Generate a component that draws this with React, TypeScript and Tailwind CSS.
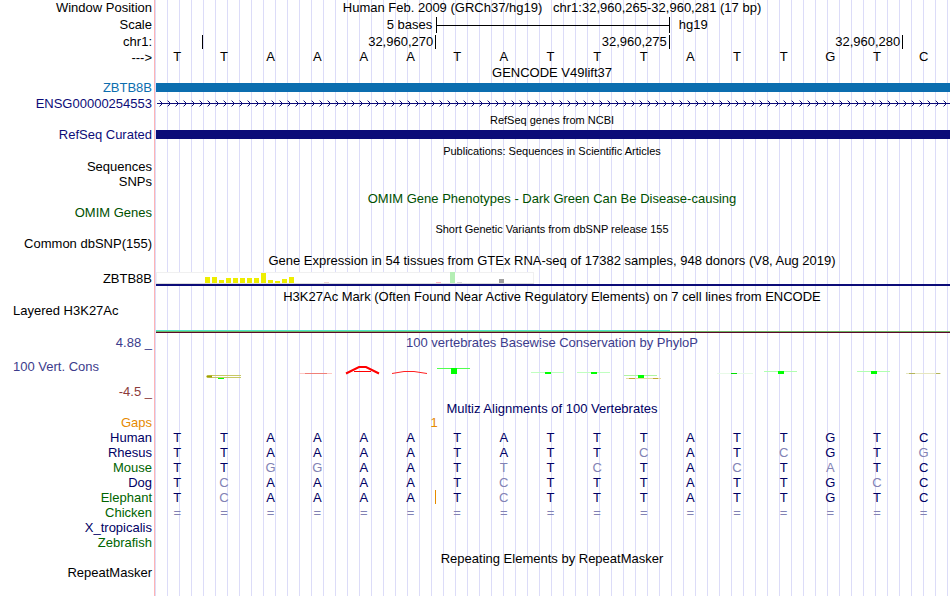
import type { ReactNode } from "react";
import clsx from "clsx";

interface RowProps {
  label?: string;
  height: string;
  labelClass?: string;
  align?: string;
  children?: ReactNode;
}

const Row = ({
  label,
  height,
  labelClass = "text-black text-right",
  align = "items-center",
  children,
}: RowProps) => (
  <div className={clsx("flex", height, align)}>
    <div
      className={clsx(
        "w-[154px] shrink-0 pl-[13px] pr-[2px] leading-4 whitespace-nowrap",
        labelClass
      )}
    >
      {label}
    </div>
    <div className="min-w-0 flex-1">{children}</div>
  </div>
);

const Title = ({
  height,
  className = "text-black",
  children,
}: {
  height: string;
  className?: string;
  children: ReactNode;
}) => (
  <Row height={height}>
    <h2
      className={clsx(
        "text-center leading-4 whitespace-pre",
        className
      )}
    >
      {children}
    </h2>
  </Row>
);

const REFERENCE = "TTAAAATATTTATTGTC";

const SPECIES = [
  { name: "Human", color: "text-[#000064]", bases: "TTAAAATATTTATTGTC" },
  { name: "Rhesus", color: "text-[#000064]", bases: "TTAAAATATTCATCGTG" },
  { name: "Mouse", color: "text-[#006400]", bases: "TTGGAATTTCTACTATC" },
  { name: "Dog", color: "text-[#000064]", bases: "TCAAAATCTTTATTGCC" },
  { name: "Elephant", color: "text-[#006400]", bases: "TCAAAATCTTTATTGTC", insertAfter: 5 },
  { name: "Chicken", color: "text-[#006400]", bases: "=================" },
  { name: "X_tropicalis", color: "text-[#000064]", bases: "" },
  { name: "Zebrafish", color: "text-[#006400]", bases: "" },
];

// [x, height, color]
const TISSUES: [number, number, string][] = [
  [49, 6, "#eeee00"],
  [56, 6, "#eeee00"],
  [63, 3, "#eeee00"],
  [70, 5, "#eeee00"],
  [77, 5, "#eeee00"],
  [84, 5, "#eeee00"],
  [91, 5, "#eeee00"],
  [98, 5, "#eeee00"],
  [105, 10, "#eeee00"],
  [112, 3, "#eeee00"],
  [119, 2, "#eeee00"],
  [126, 4, "#eeee00"],
  [133, 6, "#eeee00"],
  [168, 1, "#eed5d2"],
  [280, 1, "#ffb6c1"],
  [294, 11, "#b4eeb4"],
  [301, 1, "#d9d9d9"],
  [343, 4, "#9e9e9e"],
];

// flattened T marks: x, y, stem height, bar color
const CONS_MARKS: [number, number, number, string][] = [
  [281, 16, 6, "#50ff50"],
  [375, 20, 2, "#c0ffc0"],
  [421, 20, 2, "#c0ffc0"],
  [468, 23, 3, "#b0f5a0"],
  [608, 19, 3, "#b0ffb0"],
  [701, 19, 3, "#b0ffb0"],
];

const IntronArrows = () => (
  <svg className="block h-[7px] w-full" shapeRendering="crispEdges">
    <defs>
      <pattern id="chevron" width="8" height="7" patternUnits="userSpaceOnUse">
        <path d="M4 1h1v1h-1zM5 2h1v1h-1zM6 3h1v1h-1zM5 4h1v1h-1zM4 5h1v1h-1z" fill="#0c0c78" />
        <path d="M3 0h1v1h-1zM3 6h1v1h-1z" fill="#9a9acc" />
      </pattern>
    </defs>
    <rect width="100%" height="7" fill="url(#chevron)" />
    <rect x="1" y="3" width="100%" height="1" fill="#0c0c78" />
  </svg>
);

const ExpressionChart = () => (
  <svg className="block h-3 w-[378px]" shapeRendering="crispEdges">
    <rect width="378" height="12" fill="#f0f0f0" />
    <rect x="1" y="1" width="376" height="10" fill="#ffffff" />
    <rect y="11" width="378" height="1" fill="#dcdcdc" />
    {TISSUES.map(([x, h, color]) => (
      <rect key={x} x={x} y={11 - h} width="5" height={h} fill={color} />
    ))}
  </svg>
);

const ConservationChart = () => (
  <svg className="block h-[29px] w-full">
    <g fill="none">
      <path d="M85 23.5H56Q50 23.5 50 24.5Q50 25.5 56 25.5H85" stroke="#c8c864" />
      <path d="M51 24.5h5" stroke="#a0a000" strokeWidth="2" />
      <path d="M143 21.5h33" stroke="#ffc8c4" />
      <path d="M149 21.5h22" stroke="#f08078" />
      <path d="M190 21.5L203 15H210L223 21.5" stroke="#ff0000" strokeWidth="2" />
      <path d="M198 19.5h17" stroke="#ff0000" />
      <path d="M236 21.5L248 19.5H258L271 21.5" stroke="#ff2020" />
      <path d="M470 26.5h35" stroke="#e6dca0" />
      <path d="M473 26.5h6M497 26.5h5" stroke="#c0a830" />
      <path d="M750 21.5h35" stroke="#e6e6be" />
      <path d="M753 21.5h6M780 21.5h4" stroke="#b4b45a" />
      <path d="M561 21.5h36" stroke="#e8fae8" />
    </g>
    <g shapeRendering="crispEdges">
      <rect x="62" y="26" width="6" height="1" fill="#00ff00" />
      <rect x="575" y="21" width="6" height="1" fill="#00e000" />
      {CONS_MARKS.map(([x, y, h, color]) => (
        <g key={x}>
          <rect x={x} y={y} width="33" height="1" fill={color} />
          <rect x={x + 14} y={y} width="6" height={h} fill="#00ff00" />
        </g>
      ))}
    </g>
  </svg>
);

const Alignment = () => (
  <div className="pr-[3px]">
    <table className="w-full table-fixed border-collapse">
      <colgroup>
        <col className="w-[154px]" />
        {REFERENCE.split("").map((_, i) => (
          <col key={i} />
        ))}
      </colgroup>
      <tbody>
        <tr className="h-[15px] text-[#e68a00]">
          <th scope="row" className="p-0 pr-[2px] text-right leading-[15px] font-normal">
            Gaps
          </th>
          {REFERENCE.split("").map((_, i) => (
            <td key={i} className="relative p-0 leading-[15px]">
              {i === 5 && <span className="absolute top-0 -right-1">1</span>}
            </td>
          ))}
        </tr>
        {SPECIES.map(({ name, color, bases, insertAfter }) => (
          <tr key={name} className="h-[15px]">
            <th
              scope="row"
              className={clsx("p-0 pr-[2px] text-right leading-[15px] font-normal", color)}
            >
              {name}
            </th>
            {REFERENCE.split("").map((ref, i) => (
              <td
                key={i}
                className={clsx(
                  "relative p-0 text-center leading-[15px]",
                  bases[i] === ref ? "text-[#000064]" : "text-[#8282b4]"
                )}
              >
                {bases[i]}
                {insertAfter === i && (
                  <span className="absolute top-0 -right-[2px] h-[14px] w-px bg-[#e68a00]" />
                )}
              </td>
            ))}
          </tr>
        ))}
      </tbody>
    </table>
  </div>
);

export default function App() {
  return (
    <main className="min-h-screen overflow-hidden bg-white bg-[linear-gradient(to_right,#ffffff_154px,#ffb4b4_154px,#ffb4b4_155px,transparent_155px),repeating-linear-gradient(to_right,transparent_0px,transparent_11px,#dcdcf8_11px,#dcdcf8_12px)] font-['Liberation_Sans',Arial,sans-serif] text-[13px] text-black">
      <Row label="Window Position" height="h-4">
        <h1 className="text-center leading-4 whitespace-pre">
          {"Human Feb. 2009 (GRCh37/hg19)   chr1:32,960,265-32,960,281 (17 bp)"}
        </h1>
      </Row>

      <Row label="Scale" height="h-[18px]">
        <div className="ml-[2px] grid grid-cols-[repeat(17,minmax(0,1fr))] leading-4">
          <div className="col-span-6 pr-1 text-right">5 bases</div>
          <div className="col-span-5 flex items-center border-x border-black">
            <div className="h-px w-full bg-black" />
          </div>
          <div className="col-span-6 pl-[9px]">hg19</div>
        </div>
      </Row>
      <Row label="chr1:" height="h-4">
        <div className="ml-[2px] grid h-[14px] grid-cols-[repeat(17,minmax(0,1fr))] leading-[14px] text-right">
          <div className="border-r border-black" />
          <div className="col-span-5 border-r border-black pr-[2px]">32,960,270</div>
          <div className="col-span-5 border-r border-black pr-[2px]">32,960,275</div>
          <div className="col-span-5 border-r border-black pr-[2px]">32,960,280</div>
        </div>
      </Row>
      <Row label="--->" height="h-4">
        <div className="grid grid-cols-[repeat(17,minmax(0,1fr))] pr-[3px] pb-[2px] text-center leading-[14px]">
          {REFERENCE.split("").map((base, i) => (
            <span key={i}>{base}</span>
          ))}
        </div>
      </Row>

      <Title height="h-[14px]">GENCODE V49lift37</Title>
      <Row label="ZBTB8B" height="h-[15px]" labelClass="text-right text-[#0c6eaf]">
        <div className="ml-[2px] h-[9px] bg-[#0c6eaf]" />
      </Row>
      <Row label="ENSG00000254553" height="h-[17px]" labelClass="text-right text-[#0c0c78]">
        <div className="ml-[2px]">
          <IntronArrows />
        </div>
      </Row>

      <Title height="h-4" className="text-[11px]">RefSeq genes from NCBI</Title>
      <Row label="RefSeq Curated" height="h-[13px]" labelClass="text-right text-[#0c0c78]">
        <div className="ml-[2px] h-[9px] bg-[#0c0c78]" />
      </Row>

      <Title height="h-5" className="text-[11px]">
        Publications: Sequences in Scientific Articles
      </Title>
      <Row label="Sequences" height="h-[11px]" />
      <Row label="SNPs" height="h-[19px]" />

      <Title height="h-[15px]" className="text-[#005000]">
        OMIM Gene Phenotypes - Dark Green Can Be Disease-causing
      </Title>
      <Row label="OMIM Genes" height="h-[13px]" labelClass="text-right text-[#005000]" />

      <Title height="h-5" className="text-[11px]">
        Short Genetic Variants from dbSNP release 155
      </Title>
      <Row label="Common dbSNP(155)" height="h-[10px]" />

      <Title height="h-[23px]">
        Gene Expression in 54 tissues from GTEx RNA-seq of 17382 samples, 948 donors (V8, Aug 2019)
      </Title>
      <Row label="ZBTB8B" height="h-[14px]">
        <div className="ml-[2px] border-b-2 border-[#0c0c78]">
          <ExpressionChart />
        </div>
      </Row>

      <Title height="h-[21px]">
        H3K27Ac Mark (Often Found Near Active Regulatory Elements) on 7 cell lines from ENCODE
      </Title>
      <Row
        label="Layered H3K27Ac"
        height="h-[26px]"
        labelClass="text-left -mt-[4px]"
        align="items-start"
      >
        <div className="ml-[2px] flex h-[26px] flex-col justify-end">
          <div className="h-px w-11/17 bg-[#50e6c8]" />
          <div className="h-px bg-[#6eb464]" />
          <div className="h-px bg-[#5a0a28]" />
        </div>
      </Row>

      <Row label="4.88 _" height="h-[19px]" labelClass="text-right text-[#3c3c8c]">
        <h2 className="text-center leading-4 text-[#3c3c8c]">
          100 vertebrates Basewise Conservation by PhyloP
        </h2>
      </Row>
      <Row label="100 Vert. Cons" height="h-[29px]" labelClass="text-left text-[#3c3c8c]">
        <div className="ml-[2px]">
          <ConservationChart />
        </div>
      </Row>
      <Row label="-4.5 _" height="h-[22px]" labelClass="text-right text-[#8c3c3c]" />

      <Title height="h-3" className="text-[#000064]">
        Multiz Alignments of 100 Vertebrates
      </Title>
      <Alignment />

      <Title height="h-[17px]">Repeating Elements by RepeatMasker</Title>
      <Row label="RepeatMasker" height="h-3" />
    </main>
  );
}
